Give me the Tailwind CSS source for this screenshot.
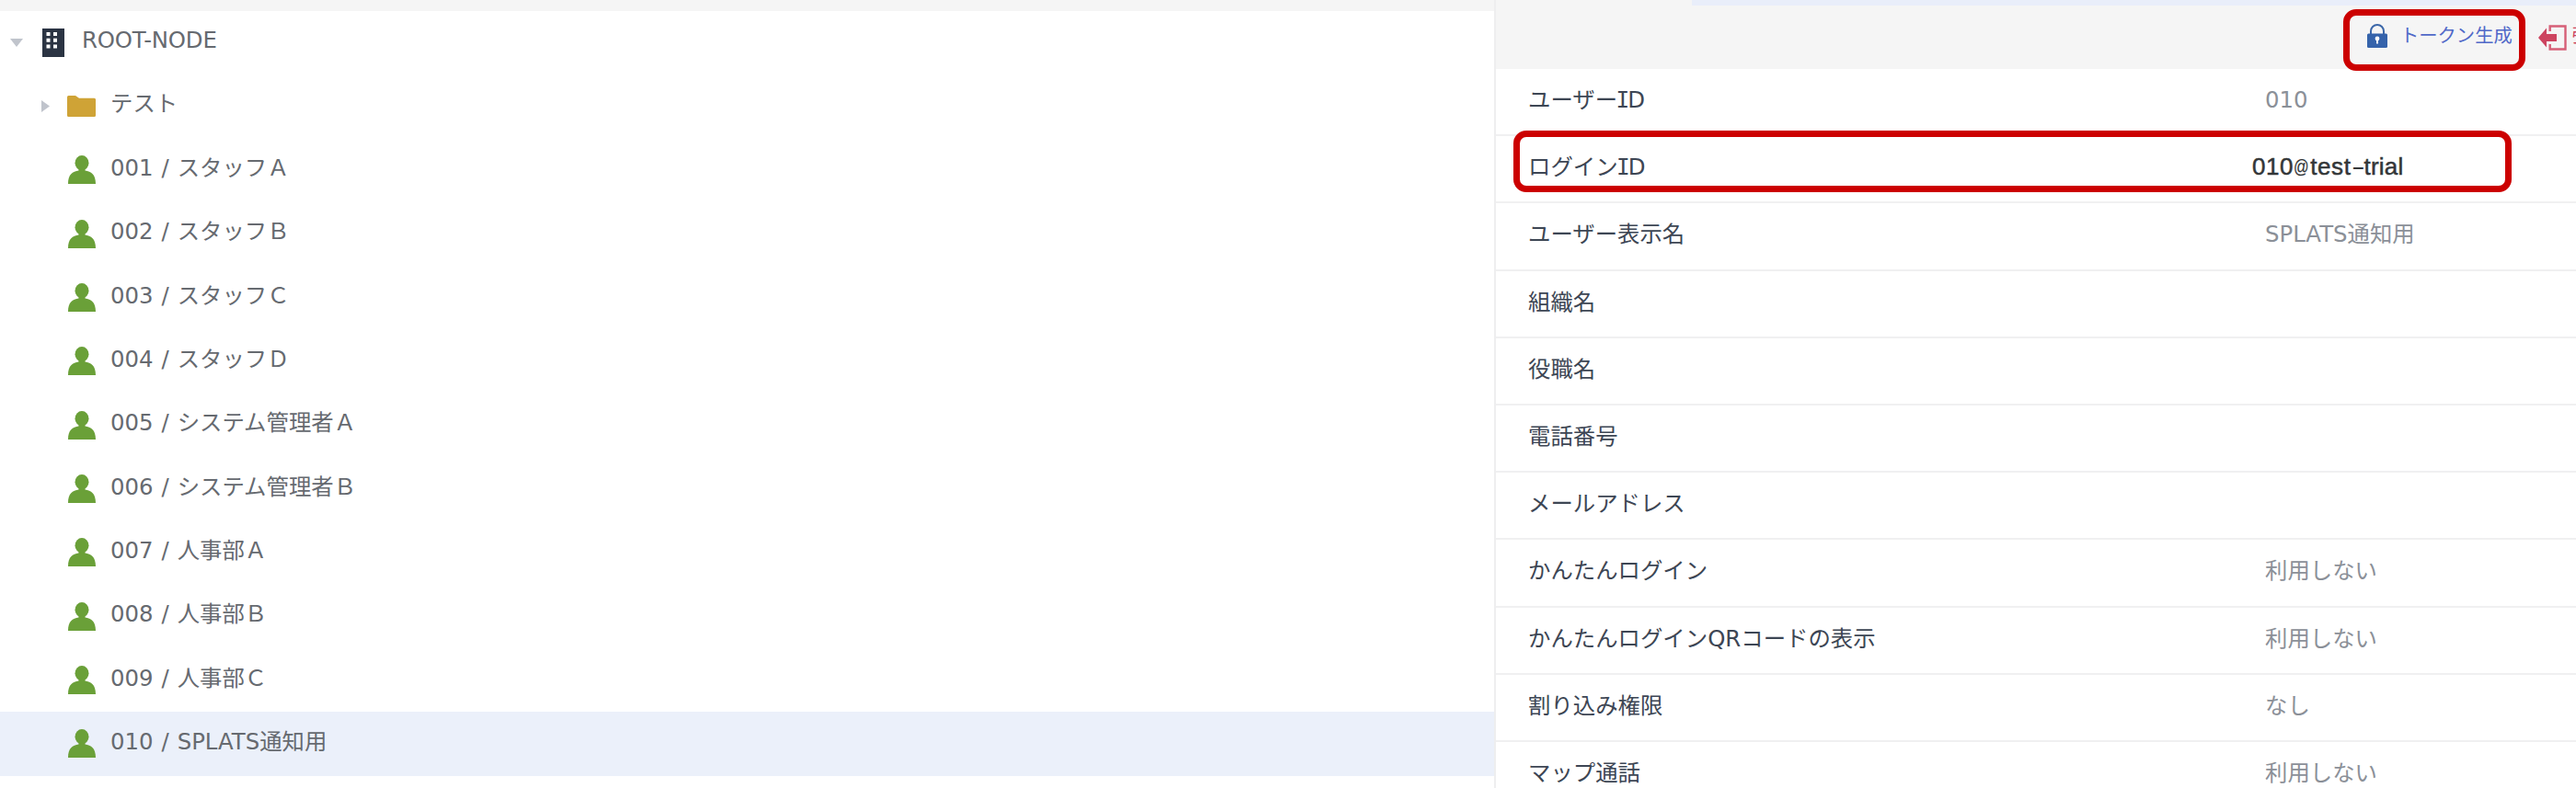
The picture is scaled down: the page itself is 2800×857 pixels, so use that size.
<!DOCTYPE html>
<html lang="ja">
<head>
<meta charset="utf-8">
<title>ユーザー管理</title>
<script src="https://cdn.jsdelivr.net/npm/@tailwindcss/browser@4"></script>
</head>
<body class="bg-white">
<div class="relative flex h-[857px] w-[2800px] overflow-hidden font-['DejaVu_Sans','Noto_Sans_CJK_JP',sans-serif] text-[24.4px] leading-[36px]">

  <aside class="h-full w-[1624px] shrink-0">
    <div class="h-[11.67px] bg-[#f5f5f5]"></div>
    <ul id="tree" class="text-[#666a70] [word-spacing:1.2px]">
      <li class="flex h-[69.33px] items-center pb-[4px]">
        <svg class="ml-[11px] mt-[5px] h-[9px] w-[14px] shrink-0" viewBox="0 0 14 9"><path d="M0 0h14L7 9z" fill="#c0c4cc"/></svg>
        <svg class="ml-[21px] mt-[5px] h-[31px] w-[24px] shrink-0" viewBox="0 0 24 31"><path d="M0 0h24v31H0z" fill="#2b3443"/><path d="M4.500 4h4v4h-4zM12 4h4v4h-4zM4.500 10.800h4v4h-4zM12 10.800h4v4h-4zM4.500 17.600h4v4h-4zM12 17.600h4v4h-4z" fill="#fff"/></svg>
        <span class="ml-[19px] tracking-[-0.2px]">ROOT-NODE</span>
      </li>
      <li class="flex h-[69.33px] items-center pb-[6px]">
        <svg class="ml-[45px] mt-[5px] h-[13px] w-[9px] shrink-0" viewBox="0 0 9 13"><path d="M0 0v13l9-6.500z" fill="#c0c4cc"/></svg>
        <svg class="ml-[19px] mt-[5px] h-[23px] w-[31px] shrink-0" viewBox="0 0 31 23"><path d="M0 1.500Q0 0 1.500 0H9l4 2.700h16.500q1.500 0 1.500 1.500V21.500Q31 23 29.500 23h-28Q0 23 0 21.500z" fill="#cfa336"/></svg>
        <span class="ml-[16px]">テスト</span>
      </li>
    </ul>
  </aside>

  <main class="flex h-full w-[1176px] shrink-0 flex-col border-l-2 border-[#eeeeef]">
    <header class="relative flex h-[75px] shrink-0 bg-[#f5f5f5]">
      <div class="absolute top-0 right-0 h-[6px] w-[961px] bg-[#e9eefa]"></div>
      <div class="ml-[947px] flex h-[78px] w-[225px] shrink-0 items-center">
        <svg class="h-[26px] w-[22px] shrink-0" viewBox="0 0 22 26"><path d="M4 12V8a7 7 0 0 1 14 0v4" fill="none" stroke="#3a66a8" stroke-width="2"/><rect y="10.500" width="22" height="15.500" rx="1.500" fill="#3563ab"/><circle cx="11" cy="16" r="2.400" fill="#fff"/><path d="M10 16h2v5.500h-2z" fill="#fff"/></svg>
        <span class="ml-[14px] whitespace-nowrap text-[20.3px] text-[#5068c8]">トークン生成</span>
        <svg class="ml-[28px] mt-[3px] h-[28px] w-[31px] shrink-0" viewBox="0 0 31 28"><path d="M12.700 7V1.500h16.800v25H12.700V21" fill="none" stroke="#d65f77" stroke-width="2.400"/><path d="M0 14 9 3.500V10h11v8H9v6.500z" fill="#cd4460"/></svg>
        <span class="ml-[6px] whitespace-nowrap text-[20.3px] text-[#cd4460]">強制ログアウト</span>
      </div>
    </header>
    <dl id="details"></dl>
  </main>

  <!-- highlight frames -->
  <div class="absolute left-[2547px] top-[10px] h-[66.500px] w-[198px] rounded-[14px] border-[7px] border-[#cc0000]"></div>
  <div class="absolute left-[1644.500px] top-[142px] h-[66.500px] w-[1085px] rounded-[14px] border-[7px] border-[#cc0000]"></div>
</div>

<template id="user">
  <li class="flex h-[69.33px] items-center pb-[4px]">
    <svg class="ml-[74px] mt-[4px] h-[31px] w-[30px] shrink-0" viewBox="0 0 30 31"><ellipse cx="15" cy="8.200" rx="7.500" ry="8.200" fill="#6aa038"/><path d="M11.500 13h7v3.500c6.500 1.200 11.500 4 11.500 14.500H0c0-10.500 5-13.300 11.500-14.500z" fill="#6aa038"/></svg>
    <span class="ml-[16px] whitespace-pre"></span>
  </li>
</template>
<template id="field">
  <div class="flex h-[73.2px] items-center border-b-2 border-[#f0f0f1] pb-[3px]">
    <dt class="ml-[35px] w-[801px] shrink-0 whitespace-nowrap text-[#3d4654]"></dt>
    <dd class="whitespace-nowrap text-[#8b9098]"></dd>
  </div>
</template>
<template id="id-label"><span class="-ml-[1.5px] -mr-[2px] font-['DejaVu_Sans_Mono',monospace]">I</span>D</template>
<template id="login-id"><span class="-ml-[14px] flex items-baseline font-['Liberation_Sans',sans-serif] text-[26px] text-[#333638] [-webkit-text-stroke:0.5px_#333638]"><span class="tracking-[0.6px]">010</span><span class="inline-block w-[18px] origin-left -translate-y-[2px] scale-x-[0.82] text-[20px] [-webkit-text-stroke:0.2px_#333638]">@</span><span class="tracking-[0.6px]">test</span><span class="inline-block w-[14px] origin-left scale-x-[1.700] [-webkit-text-stroke:0]">-</span><span class="tracking-[0.2px]">trial</span></span></template>
<script>
const users = ['001 / スタッフＡ','002 / スタッフＢ','003 / スタッフＣ','004 / スタッフＤ','005 / システム管理者Ａ','006 / システム管理者Ｂ','007 / 人事部Ａ','008 / 人事部Ｂ','009 / 人事部Ｃ','010 / SPLATS通知用'];
users.forEach((name, i) => {
  const li = document.getElementById('user').content.firstElementChild.cloneNode(true);
  li.querySelector('span').textContent = name;
  if (i === users.length - 1) li.classList.add('bg-[#ebf0fa]');
  document.getElementById('tree').append(li);
});
const ID = document.getElementById('id-label').innerHTML;
const login = document.getElementById('login-id').innerHTML;
const fields = [['ユーザー' + ID,'010'],['ログイン' + ID, login],['ユーザー表示名','SPLATS通知用'],['組織名',''],['役職名',''],['電話番号',''],['メールアドレス',''],['かんたんログイン','利用しない'],['かんたんログインQRコードの表示','利用しない'],['割り込み権限','なし'],['マップ通話','利用しない']];
fields.forEach(([label, value]) => {
  const row = document.getElementById('field').content.firstElementChild.cloneNode(true);
  row.querySelector('dt').innerHTML = label;
  row.querySelector('dd').innerHTML = value;
  document.getElementById('details').append(row);
});
</script>
</body>
</html>
